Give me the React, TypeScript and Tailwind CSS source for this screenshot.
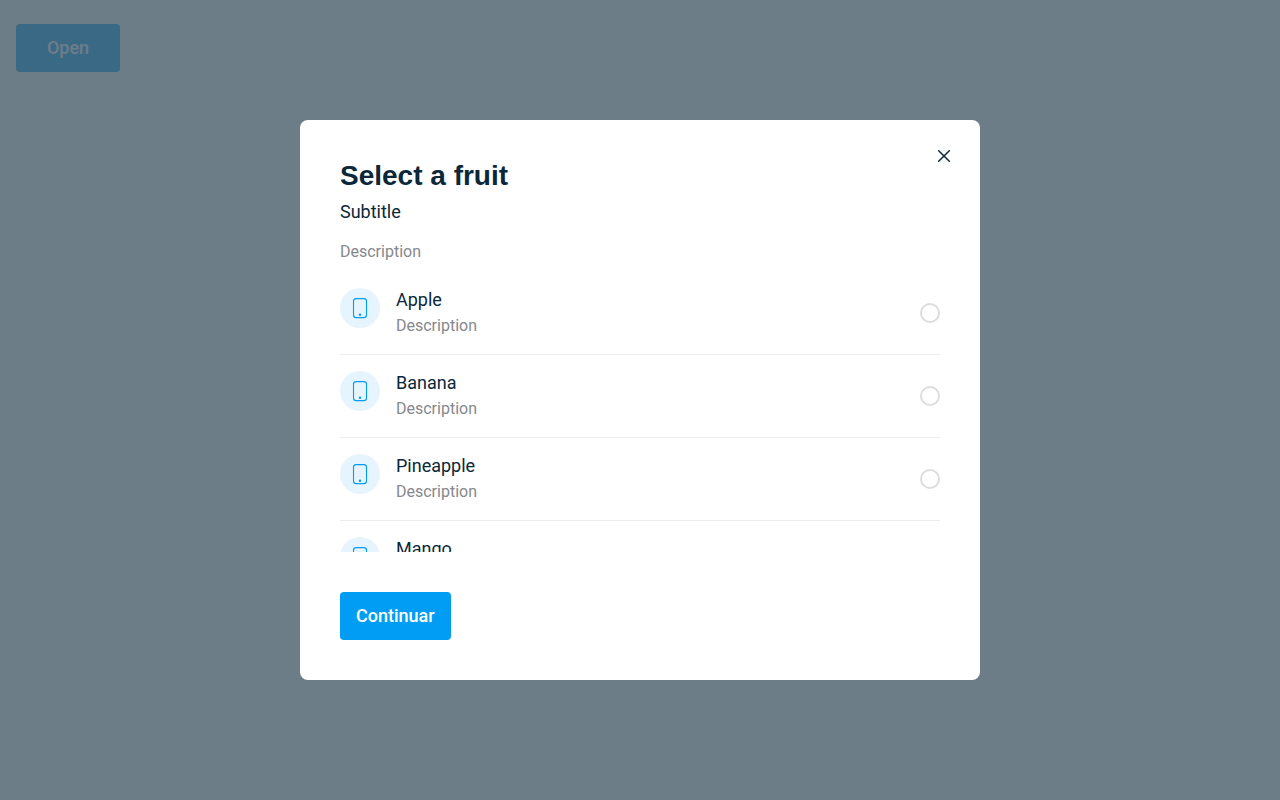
import { useState } from 'react';

const fruits = ['Apple', 'Banana', 'Pineapple', 'Mango'];

function PhoneIcon() {
  return (
    <svg width="24" height="24" viewBox="0 0 24 24" fill="none" aria-hidden="true">
      <rect x="5.5" y="2.6" width="13" height="19" rx="2.7" stroke="#019DF4" strokeWidth="1.1" />
      <circle cx="12" cy="18.7" r="1.2" fill="#019DF4" />
    </svg>
  );
}

function CloseIcon() {
  return (
    <svg width="24" height="24" viewBox="0 0 24 24" fill="none" aria-hidden="true">
      <path d="M6.7 6.7L17.3 17.3M17.3 6.7L6.7 17.3" stroke="#0B2739" strokeWidth="1.5" strokeLinecap="round" />
    </svg>
  );
}

type FruitRowProps = { name: string; checked: boolean; onSelect: () => void };

function FruitRow({ name, checked, onSelect }: FruitRowProps) {
  return (
    <li className="border-b border-[#EEEEEE] last:border-b-0">
      <label className="flex cursor-pointer items-center gap-4 py-4">
        <span className="flex size-10 shrink-0 items-center justify-center self-start rounded-full bg-[#E6F5FD]">
          <PhoneIcon />
        </span>
        <span className="flex min-w-0 flex-1 flex-col gap-0.5">
          <span className="text-lg leading-6">{name}</span>
          <span className="text-base leading-6 text-[#86888C]">Description</span>
        </span>
        <input
          type="radio"
          name="fruit"
          value={name}
          checked={checked}
          onChange={onSelect}
          className="size-5 shrink-0 appearance-none rounded-full border-2 border-[#DDDDDD] checked:border-[6px] checked:border-[#019DF4]"
        />
      </label>
    </li>
  );
}

export default function App() {
  const [selected, setSelected] = useState('');

  return (
    <div className="min-h-screen bg-white font-[Roboto,sans-serif] text-[#0B2739]">
      <main className="px-4 py-6">
        <button
          type="button"
          disabled
          className="h-12 min-w-[104px] rounded bg-[#019DF4] px-4 text-lg leading-6 font-medium text-white opacity-50"
        >
          Open
        </button>
      </main>

      <div className="fixed inset-0 flex items-center justify-center bg-[#0B2739]/60">
        <section
          role="dialog"
          aria-modal="true"
          aria-labelledby="dialog-title"
          className="relative flex max-h-[70vh] w-full max-w-[680px] flex-col rounded-lg bg-white p-10"
        >
          <button type="button" aria-label="Close" className="absolute top-6 right-6 cursor-pointer">
            <CloseIcon />
          </button>
          <h2 id="dialog-title" className="font-['Liberation_Sans',Arial,sans-serif] text-[28px] leading-8 font-bold">
            Select a fruit
          </h2>
          <p className="mt-2 text-lg leading-6">Subtitle</p>
          <p className="mt-4 text-base leading-6 text-[#86888C]">Description</p>
          <ul className="mt-2 min-h-0 flex-1 overflow-y-auto [scrollbar-width:none]">
            {fruits.map((name) => (
              <FruitRow key={name} name={name} checked={selected === name} onSelect={() => setSelected(name)} />
            ))}
          </ul>
          <div className="pt-10">
            <button
              type="button"
              className="h-12 min-w-[104px] cursor-pointer rounded bg-[#019DF4] px-4 text-lg leading-6 font-medium text-white"
            >
              Continuar
            </button>
          </div>
        </section>
      </div>
    </div>
  );
}
